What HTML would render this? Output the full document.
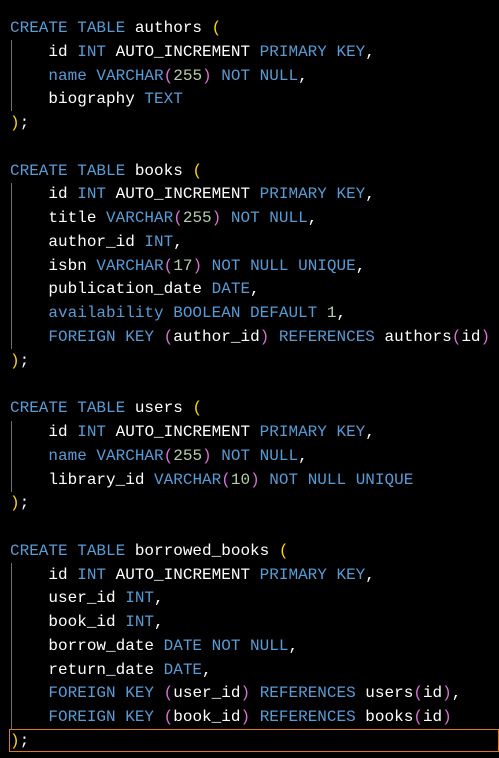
<!DOCTYPE html><html><head><style>
body{margin:0;background:#000;width:499px;height:758px;overflow:hidden;position:relative}
pre{margin:0;position:absolute;left:10px;top:17px;font-family:"Liberation Mono",monospace;font-size:16px;line-height:23.77px;color:#fff}
.k{color:#569cd6}.n{color:#b5cea8}.y{color:#ffd700}.p{color:#da70d6}
.g{position:absolute;left:11px;width:1px;background:#707070}
.box{position:absolute;left:9px;right:0;top:729px;height:23px;border:1px solid #e07a1f;box-sizing:border-box}
</style></head><body>
<div class="g" style="top:40px;height:71px"></div>
<div class="g" style="top:183px;height:166px"></div>
<div class="g" style="top:421px;height:71px"></div>
<div class="g" style="top:563px;height:166px"></div>
<div class="box"></div>
<pre><span class="k">CREATE TABLE</span> authors <span class="y">(</span>
    id <span class="k">INT</span> AUTO_INCREMENT <span class="k">PRIMARY KEY</span>,
    <span class="k">name VARCHAR</span><span class="p">(</span><span class="n">255</span><span class="p">)</span> <span class="k">NOT NULL</span>,
    biography <span class="k">TEXT</span>
<span class="y">)</span>;

<span class="k">CREATE TABLE</span> books <span class="y">(</span>
    id <span class="k">INT</span> AUTO_INCREMENT <span class="k">PRIMARY KEY</span>,
    title <span class="k">VARCHAR</span><span class="p">(</span><span class="n">255</span><span class="p">)</span> <span class="k">NOT NULL</span>,
    author_id <span class="k">INT</span>,
    isbn <span class="k">VARCHAR</span><span class="p">(</span><span class="n">17</span><span class="p">)</span> <span class="k">NOT NULL UNIQUE</span>,
    publication_date <span class="k">DATE</span>,
    <span class="k">availability BOOLEAN DEFAULT</span> <span class="n">1</span>,
    <span class="k">FOREIGN KEY</span> <span class="p">(</span>author_id<span class="p">)</span> <span class="k">REFERENCES</span> authors<span class="p">(</span>id<span class="p">)</span>
<span class="y">)</span>;

<span class="k">CREATE TABLE</span> users <span class="y">(</span>
    id <span class="k">INT</span> AUTO_INCREMENT <span class="k">PRIMARY KEY</span>,
    <span class="k">name VARCHAR</span><span class="p">(</span><span class="n">255</span><span class="p">)</span> <span class="k">NOT NULL</span>,
    library_id <span class="k">VARCHAR</span><span class="p">(</span><span class="n">10</span><span class="p">)</span> <span class="k">NOT NULL UNIQUE</span>
<span class="y">)</span>;

<span class="k">CREATE TABLE</span> borrowed_books <span class="y">(</span>
    id <span class="k">INT</span> AUTO_INCREMENT <span class="k">PRIMARY KEY</span>,
    user_id <span class="k">INT</span>,
    book_id <span class="k">INT</span>,
    borrow_date <span class="k">DATE NOT NULL</span>,
    return_date <span class="k">DATE</span>,
    <span class="k">FOREIGN KEY</span> <span class="p">(</span>user_id<span class="p">)</span> <span class="k">REFERENCES</span> users<span class="p">(</span>id<span class="p">)</span>,
    <span class="k">FOREIGN KEY</span> <span class="p">(</span>book_id<span class="p">)</span> <span class="k">REFERENCES</span> books<span class="p">(</span>id<span class="p">)</span>
<span class="y">)</span>;</pre>
</body></html>
